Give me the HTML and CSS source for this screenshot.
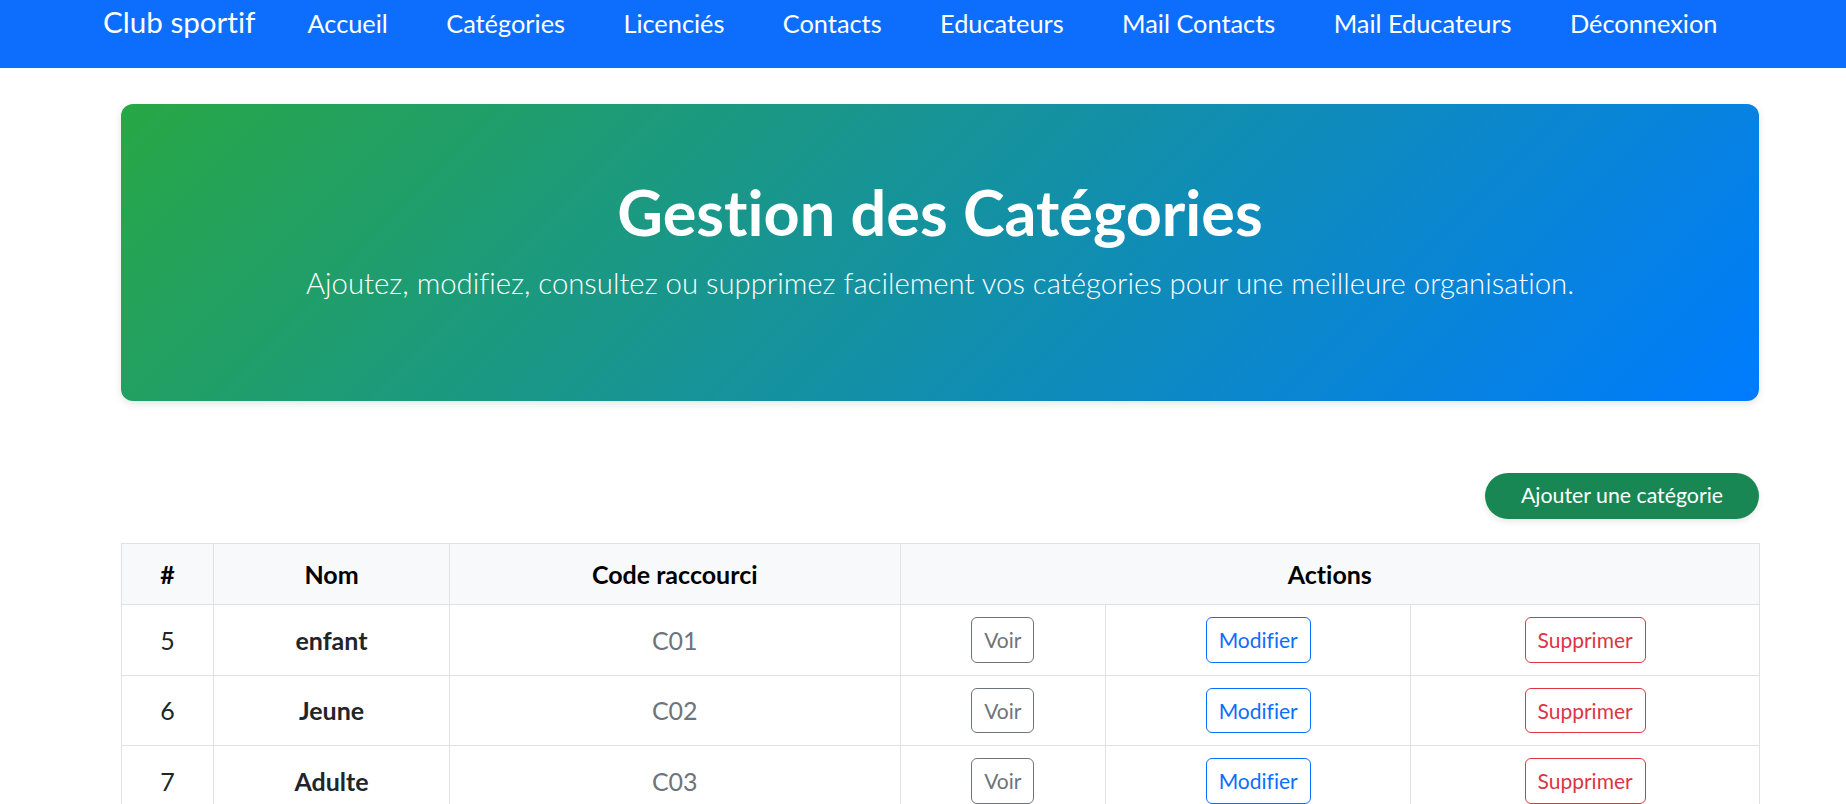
FILE: index.html
```html
<!DOCTYPE html>
<html lang="fr">
<head>
<meta charset="utf-8">
<title>Gestion des Catégories</title>
<link rel="stylesheet" href="styles.css">
</head>
<body>
<nav class="navbar">
  <div class="container nav-inner">
    <a class="brand" href="#">Club sportif</a>
    <ul class="nav-links">
      <li><a href="#">Accueil</a></li>
      <li><a href="#">Catégories</a></li>
      <li><a href="#">Licenciés</a></li>
      <li><a href="#">Contacts</a></li>
      <li><a href="#">Educateurs</a></li>
      <li><a href="#">Mail Contacts</a></li>
      <li><a href="#">Mail Educateurs</a></li>
      <li><a href="#">Déconnexion</a></li>
    </ul>
  </div>
</nav>

<main class="container page">
  <section class="hero">
    <h1 class="hero-title">Gestion des Catégories</h1>
    <p class="hero-lead">Ajoutez, modifiez, consultez ou supprimez facilement vos catégories pour une meilleure organisation.</p>
  </section>

  <div class="toolbar">
    <a class="btn-add" href="#">Ajouter une catégorie</a>
  </div>

  <table class="cat-table">
    <colgroup>
      <col class="c-id"><col class="c-nom"><col class="c-code"><col class="c-voir"><col class="c-mod"><col class="c-sup">
    </colgroup>
    <thead>
      <tr>
        <th>#</th>
        <th>Nom</th>
        <th>Code raccourci</th>
        <th colspan="3">Actions</th>
      </tr>
    </thead>
    <tbody>
      <tr>
        <td>5</td>
        <td class="nom">enfant</td>
        <td class="code">C01</td>
        <td><a class="btn btn-voir" href="#">Voir</a></td>
        <td><a class="btn btn-mod" href="#">Modifier</a></td>
        <td><a class="btn btn-sup" href="#">Supprimer</a></td>
      </tr>
      <tr>
        <td>6</td>
        <td class="nom">Jeune</td>
        <td class="code">C02</td>
        <td><a class="btn btn-voir" href="#">Voir</a></td>
        <td><a class="btn btn-mod" href="#">Modifier</a></td>
        <td><a class="btn btn-sup" href="#">Supprimer</a></td>
      </tr>
      <tr>
        <td>7</td>
        <td class="nom">Adulte</td>
        <td class="code">C03</td>
        <td><a class="btn btn-voir" href="#">Voir</a></td>
        <td><a class="btn btn-mod" href="#">Modifier</a></td>
        <td><a class="btn btn-sup" href="#">Supprimer</a></td>
      </tr>
    </tbody>
  </table>
</main>
</body>
</html>
```
FILE: styles.css
```css
* { box-sizing: border-box; }

body {
  margin: 0;
  font-family: "Lato", "Noto Sans", sans-serif;
  font-variant-ligatures: no-common-ligatures;
  color: #212529;
  background: #fff;
}

a { text-decoration: none; }

.container {
  width: 1710px;
  margin-left: 85px;
}

/* ---------- Navbar ---------- */
.navbar {
  background: #0d6efd;
  height: 68px;
}

.nav-inner {
  display: flex;
  align-items: baseline;
  padding: 3.5px 18px 0;
}

.brand {
  color: #fff;
  font-size: 29.6px;
  line-height: 36px;
}

.nav-links {
  list-style: none;
  margin: 0 0 0 52px;
  padding: 0;
  display: flex;
  gap: 58.4px;
}

.nav-links a {
  color: #fff;
  font-size: 25.35px;
  line-height: 36px;
}

/* ---------- Page ---------- */
.page {
  padding: 36px 36px 0;
}

.hero {
  height: 297px;
  padding-top: 72px;
  border-radius: 12px;
  background: linear-gradient(135deg, #28a745, #007bff);
  box-shadow: 0 3px 8px rgba(0, 0, 0, 0.1);
  color: #fff;
  text-align: center;
}

.hero-title {
  margin: 0 0 12px;
  font-size: 63px;
  line-height: 72px;
  font-weight: 700;
}

.hero-lead {
  margin: 0;
  font-size: 29.3px;
  line-height: 45px;
  font-weight: 300;
}

.toolbar {
  display: flex;
  justify-content: flex-end;
  margin: 72px 0 24px;
}

.btn-add {
  display: inline-flex;
  align-items: center;
  height: 46px;
  padding: 0 36px;
  border-radius: 50rem;
  background: #198754;
  color: #fff;
  font-size: 21.3px;
  line-height: 31.5px;
  box-shadow: 0 3px 6px rgba(0, 0, 0, 0.09);
}

/* ---------- Table ---------- */
.cat-table {
  width: 1638px;
  border-collapse: collapse;
  table-layout: fixed;
}

.c-id { width: 92px; }
.c-nom { width: 236px; }
.c-code { width: 450.5px; }
.c-voir { width: 205.7px; }
.c-mod { width: 305px; }
.c-sup { width: 348.8px; }

.cat-table th,
.cat-table td {
  border: 1px solid #dee2e6;
  padding: 12px;
  text-align: center;
  vertical-align: middle;
  font-size: 25px;
  line-height: 36px;
}

.cat-table th {
  background: #f8f9fa;
  color: #000;
  font-weight: 700;
}

.cat-table td.nom { font-weight: 700; }
.cat-table td.code { color: #6c757d; }

.btn {
  display: inline-flex;
  align-items: center;
  justify-content: center;
  height: 45.5px;
  padding: 0 12px;
  border: 1px solid currentColor;
  border-radius: 6px;
  font-size: 21px;
  line-height: 31.5px;
  vertical-align: middle;
}

.btn-voir { color: #6c757d; }
.btn-mod { color: #0d6efd; }
.btn-sup { color: #dc3545; }
```
